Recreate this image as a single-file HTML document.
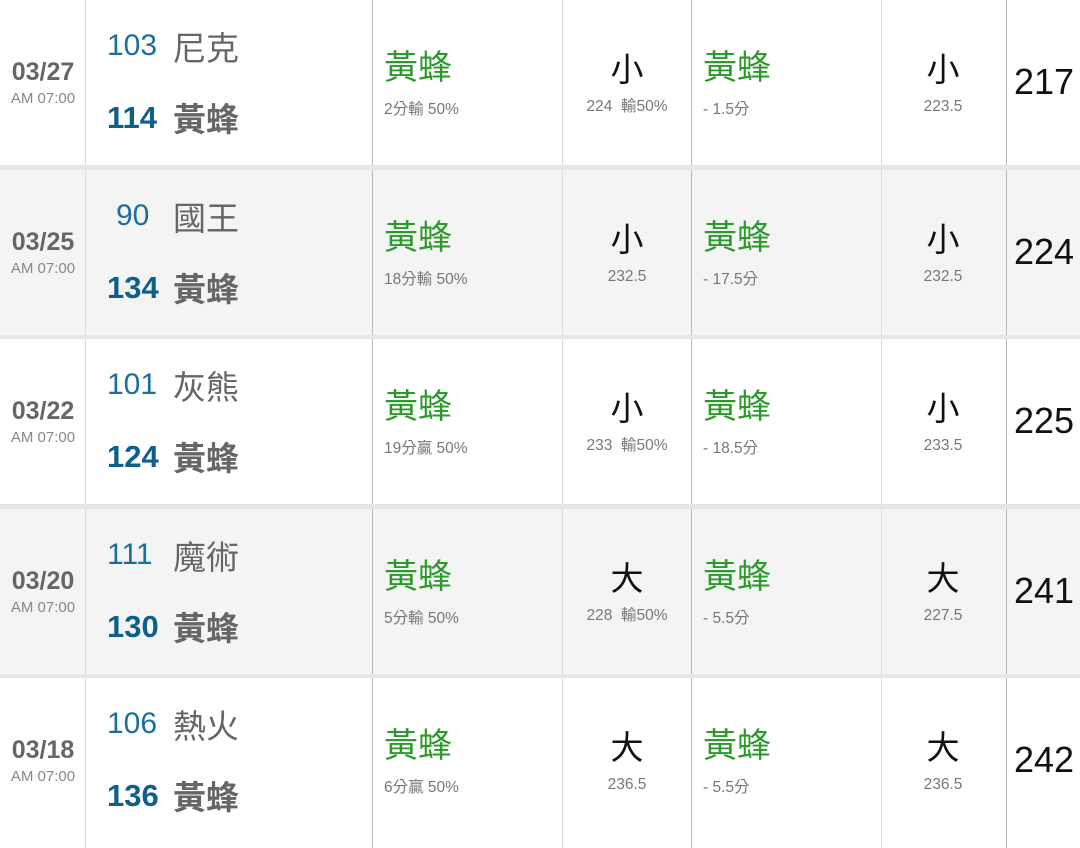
<!DOCTYPE html>
<html><head><meta charset="utf-8"><style>
body{margin:0;width:1080px;height:840px;overflow:hidden;background:#e6e6e6;font-family:"Liberation Sans","Noto Sans CJK TC",sans-serif}
.r{position:absolute;left:0;width:1080px;height:165px;background:#fff}
.r.g{background:#f4f4f4}
.v{position:absolute;top:0;height:165px;width:1px;background:#ddd}
.v.d{background:#bbb}
.t{position:absolute;white-space:nowrap;line-height:1}
.c{transform:translateX(-50%)}
.date{left:43px;top:60px;font-size:25px;font-weight:bold;color:#666}
.am{left:43px;top:91px;font-size:15px;color:#888}
.s1{top:31px;font-size:30px;color:#1b6f9c}
.n1{left:173px;top:32px;font-size:33px;color:#666}
.s2{left:107px;top:102px;font-size:31px;font-weight:bold;color:#0f5f8c}
.n2{left:173px;top:103px;font-size:33px;font-weight:bold;color:#666}
.gr{top:51px;font-size:34px;color:#2a9a2a}
.sub{top:102px;font-size:15.5px;color:#777}
.bk{top:53px;font-size:33px;color:#111}
.sub2{top:99px;font-size:15.5px;color:#777}
.tot{left:1014px;top:64px;font-size:36px;color:#111}
</style></head><body>

<div class="r" style="top:0">
<div class="v" style="left:85px"></div><div class="v d" style="left:372px"></div><div class="v" style="left:562px"></div><div class="v d" style="left:691px"></div><div class="v" style="left:881px"></div><div class="v d" style="left:1006px"></div>
<div class="t c date">03/27</div><div class="t c am">AM 07:00</div>
<div class="t s1" style="left:107px">103</div><div class="t n1">尼克</div>
<div class="t s2">114</div><div class="t n2">黃蜂</div>
<div class="t gr" style="left:384px">黃蜂</div><div class="t sub" style="left:384px">2分輸 50%</div>
<div class="t c bk" style="left:627px">小</div><div class="t c sub2" style="left:627px">224&nbsp; 輸50%</div>
<div class="t gr" style="left:703px">黃蜂</div><div class="t sub" style="left:703px">- 1.5分</div>
<div class="t c bk" style="left:943px">小</div><div class="t c sub2" style="left:943px">223.5</div>
<div class="t tot">217</div>
</div>

<div class="r g" style="top:170px">
<div class="v" style="left:85px"></div><div class="v d" style="left:372px"></div><div class="v" style="left:562px"></div><div class="v d" style="left:691px"></div><div class="v" style="left:881px"></div><div class="v d" style="left:1006px"></div>
<div class="t c date">03/25</div><div class="t c am">AM 07:00</div>
<div class="t s1" style="left:116px">90</div><div class="t n1">國王</div>
<div class="t s2">134</div><div class="t n2">黃蜂</div>
<div class="t gr" style="left:384px">黃蜂</div><div class="t sub" style="left:384px">18分輸 50%</div>
<div class="t c bk" style="left:627px">小</div><div class="t c sub2" style="left:627px">232.5</div>
<div class="t gr" style="left:703px">黃蜂</div><div class="t sub" style="left:703px">- 17.5分</div>
<div class="t c bk" style="left:943px">小</div><div class="t c sub2" style="left:943px">232.5</div>
<div class="t tot">224</div>
</div>

<div class="r" style="top:339px">
<div class="v" style="left:85px"></div><div class="v d" style="left:372px"></div><div class="v" style="left:562px"></div><div class="v d" style="left:691px"></div><div class="v" style="left:881px"></div><div class="v d" style="left:1006px"></div>
<div class="t c date">03/22</div><div class="t c am">AM 07:00</div>
<div class="t s1" style="left:107px">101</div><div class="t n1">灰熊</div>
<div class="t s2">124</div><div class="t n2">黃蜂</div>
<div class="t gr" style="left:384px">黃蜂</div><div class="t sub" style="left:384px">19分贏 50%</div>
<div class="t c bk" style="left:627px">小</div><div class="t c sub2" style="left:627px">233&nbsp; 輸50%</div>
<div class="t gr" style="left:703px">黃蜂</div><div class="t sub" style="left:703px">- 18.5分</div>
<div class="t c bk" style="left:943px">小</div><div class="t c sub2" style="left:943px">233.5</div>
<div class="t tot">225</div>
</div>

<div class="r g" style="top:509px">
<div class="v" style="left:85px"></div><div class="v d" style="left:372px"></div><div class="v" style="left:562px"></div><div class="v d" style="left:691px"></div><div class="v" style="left:881px"></div><div class="v d" style="left:1006px"></div>
<div class="t c date">03/20</div><div class="t c am">AM 07:00</div>
<div class="t s1" style="left:107px">111</div><div class="t n1">魔術</div>
<div class="t s2">130</div><div class="t n2">黃蜂</div>
<div class="t gr" style="left:384px">黃蜂</div><div class="t sub" style="left:384px">5分輸 50%</div>
<div class="t c bk" style="left:627px">大</div><div class="t c sub2" style="left:627px">228&nbsp; 輸50%</div>
<div class="t gr" style="left:703px">黃蜂</div><div class="t sub" style="left:703px">- 5.5分</div>
<div class="t c bk" style="left:943px">大</div><div class="t c sub2" style="left:943px">227.5</div>
<div class="t tot">241</div>
</div>

<div class="r" style="top:678px;height:170px">
<div class="v" style="left:85px;height:170px"></div><div class="v d" style="left:372px;height:170px"></div><div class="v" style="left:562px;height:170px"></div><div class="v d" style="left:691px;height:170px"></div><div class="v" style="left:881px;height:170px"></div><div class="v d" style="left:1006px;height:170px"></div>
<div class="t c date">03/18</div><div class="t c am">AM 07:00</div>
<div class="t s1" style="left:107px">106</div><div class="t n1">熱火</div>
<div class="t s2">136</div><div class="t n2">黃蜂</div>
<div class="t gr" style="left:384px">黃蜂</div><div class="t sub" style="left:384px">6分贏 50%</div>
<div class="t c bk" style="left:627px">大</div><div class="t c sub2" style="left:627px">236.5</div>
<div class="t gr" style="left:703px">黃蜂</div><div class="t sub" style="left:703px">- 5.5分</div>
<div class="t c bk" style="left:943px">大</div><div class="t c sub2" style="left:943px">236.5</div>
<div class="t tot">242</div>
</div>

</body></html>
